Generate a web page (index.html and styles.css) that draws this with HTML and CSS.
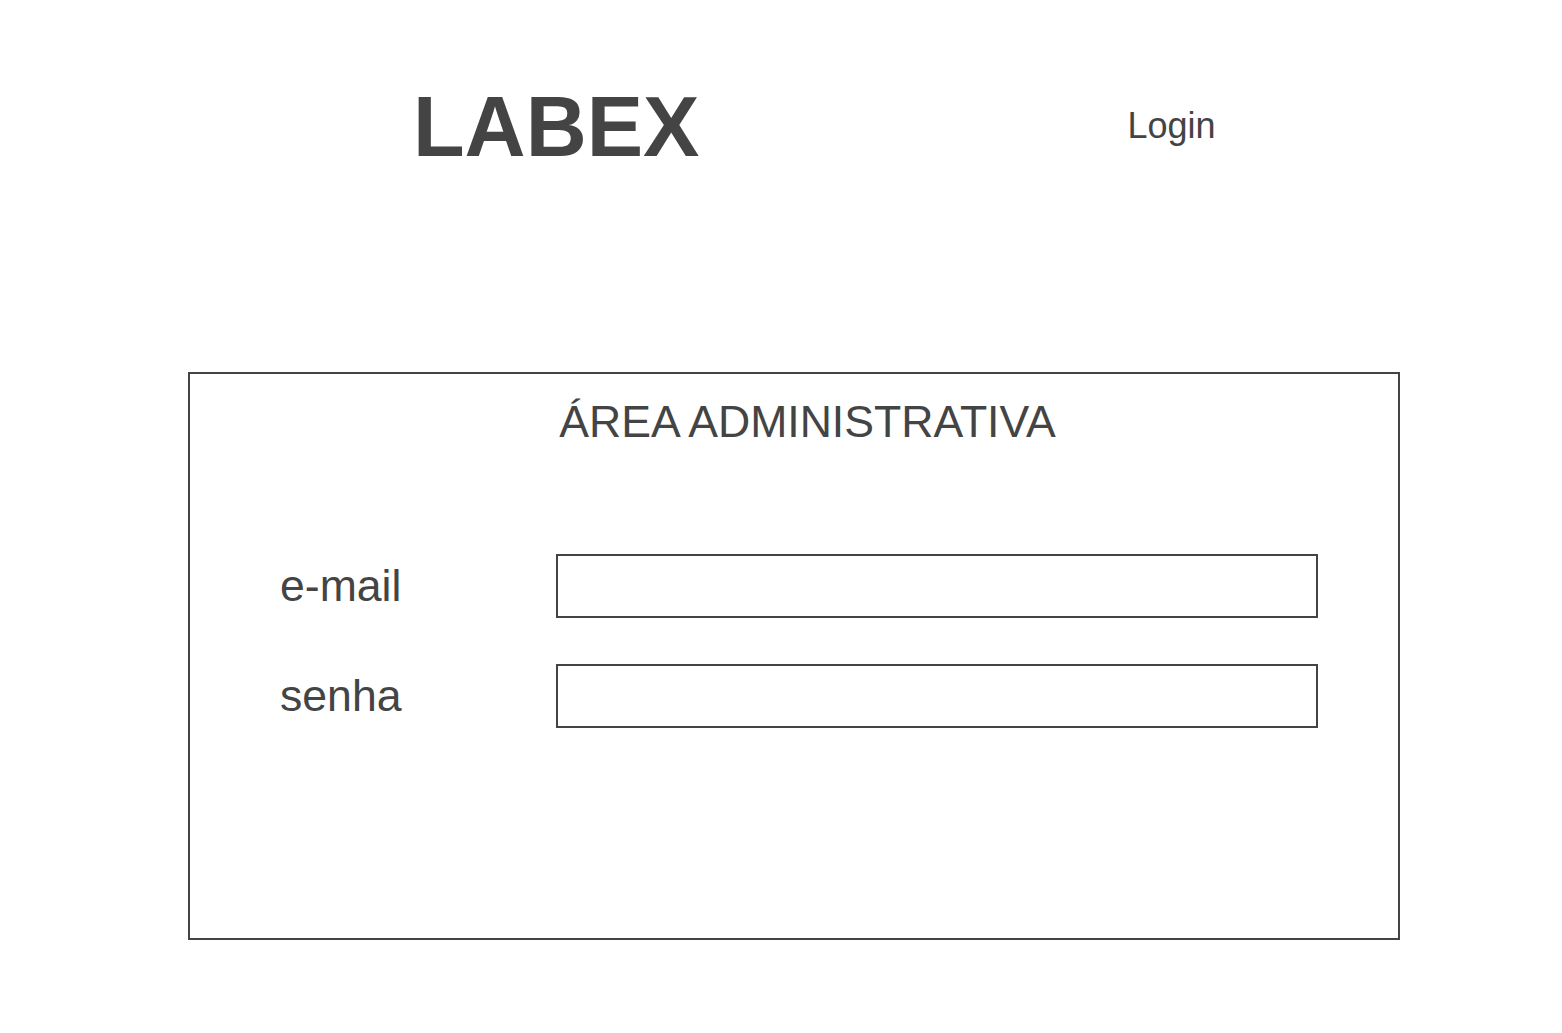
FILE: index.html
```html
<!DOCTYPE html>
<html lang="pt">
<head>
<meta charset="utf-8">
<title>LABEX</title>
<link rel="stylesheet" href="styles.css">
</head>
<body>
<header class="top">
  <div class="brand">LABEX</div>
  <nav class="nav"><a class="nav-link" href="#">Login</a></nav>
</header>
<main class="panel">
  <h1 class="panel-title">ÁREA ADMINISTRATIVA</h1>
  <form class="form">
    <div class="row">
      <label class="label" for="email">e-mail</label>
      <input class="field" id="email" type="text">
    </div>
    <div class="row">
      <label class="label" for="senha">senha</label>
      <input class="field" id="senha" type="password">
    </div>
  </form>
</main>
</body>
</html>
```
FILE: styles.css
```css
* { box-sizing: border-box; }
html, body { margin: 0; padding: 0; background: #fff; }
body {
  font-family: "Liberation Sans", Arial, sans-serif;
  color: #444;
  width: 1562px;
  height: 1033px;
  overflow: hidden;
}
.top {
  display: grid;
  grid-template-columns: 781px 781px;
  align-items: start;
  height: 250px;
}
.brand {
  font-weight: bold;
  font-size: 84.5px;
  padding-left: 413px;
  margin-top: 85px;
  line-height: 1;
}
.nav {
  text-align: center;
  margin-top: 105px;
}
.nav-link {
  font-size: 36px;
  color: #444;
  text-decoration: none;
}
.panel {
  margin: 122px 0 0 188px;
  width: 1212px;
  height: 568px;
  border: 2px solid #444;
}
.panel-title {
  margin: 0;
  padding: 22px 0 0 27px;
  text-align: center;
  font-weight: normal;
  font-size: 44.6px;
  line-height: 51px;
}
.form {
  display: flex;
  flex-direction: column;
  gap: 46px;
  padding: 107px 80px 0 90px;
}
.row {
  display: flex;
  align-items: center;
}
.label {
  width: 276px;
  font-size: 44.6px;
  line-height: 50px;
}
.field {
  width: 762px;
  height: 64px;
  border: 2px solid #444;
  border-radius: 0;
  background: #fff;
  margin: 0;
  padding: 0 10px;
  font-size: 24px;
  outline: none;
}
```
